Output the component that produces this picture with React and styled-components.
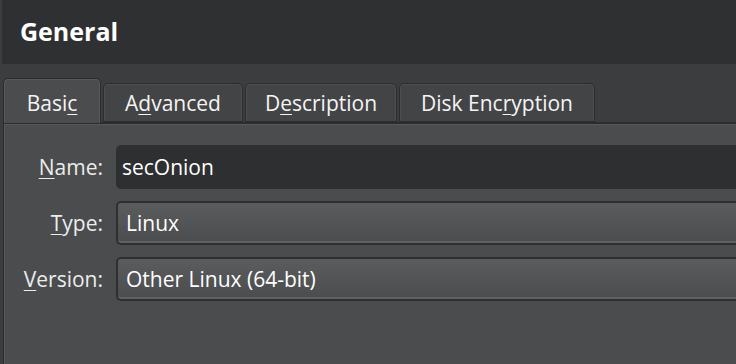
import React from "react";
import styled, { createGlobalStyle } from "styled-components";

const Global = createGlobalStyle`
  html, body {
    margin: 0;
    padding: 0;
    background: #3c3d3f;
    overflow: hidden;
  }
  body {
    font-family: "Open Sans", "Noto Sans", sans-serif;
    color: #f2f2f2;
  }
`;

const Page = styled.div`
  width: 736px;
  height: 364px;
  display: flex;
  flex-direction: column;
  background: #3c3d3f;
`;

const Header = styled.div`
  height: 64px;
  margin-left: 2px;
  padding-left: 18px;
  padding-bottom: 3px;
  box-sizing: border-box;
  display: flex;
  align-items: center;
  background: #2f3032;
  font-size: 25px;
  font-weight: 700;
  color: #ffffff;
`;

const TabBar = styled.div`
  display: flex;
  align-items: flex-end;
  gap: 2px;
  margin-top: 14px;
  padding-left: 3px;
  height: 44px;
  position: relative;
  z-index: 1;
`;

const Tab = styled.div`
  box-sizing: border-box;
  width: ${(p) => p.$w}px;
  height: ${(p) => (p.$active ? 45 : 39)}px;
  display: flex;
  align-items: center;
  justify-content: center;
  padding-top: ${(p) => (p.$active ? 4 : 1)}px;
  border: 1px solid #2b2c2e;
  border-bottom: ${(p) => (p.$active ? "none" : "1px solid #2b2c2e")};
  border-radius: 5px 5px 0 0;
  background: ${(p) => (p.$active ? "#4b4c4e" : "#434446")};
  box-shadow: inset 1px 1px 0 ${(p) => (p.$active ? "#58595b" : "#4d4e50")},
    inset -1px 0 0 ${(p) => (p.$active ? "#58595b" : "#4d4e50")};
  font-size: 21px;
  color: #f4f4f4;
  margin-bottom: ${(p) => (p.$active ? -1 : 0)}px;
`;

const Key = styled.span`
  text-decoration: underline;
  text-underline-offset: 3px;
  text-decoration-thickness: 1px;
`;

const Panel = styled.div`
  flex: 1;
  margin-left: 3px;
  border-top: 2px solid #2b2c2e;
  border-left: 1px solid #2b2c2e;
  background: #4b4c4e;
  box-shadow: inset 1px 1px 0 #58595b;
  padding-top: 21px;
  display: grid;
  grid-template-columns: 99px 1fr;
  column-gap: 13px;
  row-gap: 12px;
  align-content: start;
`;

const Label = styled.label`
  justify-self: end;
  align-self: center;
  font-size: 21px;
  color: #ececec;
`;

const Field = styled.div`
  box-sizing: border-box;
  height: 44px;
  margin-right: -8px;
  display: flex;
  align-items: center;
  font-size: 21px;
  color: #ffffff;
  border-radius: 5px;
  ${(p) =>
    p.$combo
      ? `
    padding-left: 8px;
    border: 2px solid #2e2f31;
    background: linear-gradient(#5b5c5e, #4b4c4e);
    box-shadow: inset 0 -3px 0 -1px #606163;
  `
      : `
    padding-left: 6px;
    background: #2e2f31;
  `}
`;

export default function App() {
  return (
    <Page>
      <Global />
      <Header>General</Header>
      <TabBar>
        <Tab $active $w={98}>
          Basi<Key>c</Key>
        </Tab>
        <Tab $w={140}>
          A<Key>d</Key>vanced
        </Tab>
        <Tab $w={152}>
          D<Key>e</Key>scription
        </Tab>
        <Tab $w={196}>
          Disk Enc<Key>r</Key>yption
        </Tab>
      </TabBar>
      <Panel>
        <Label>
          <Key>N</Key>ame:
        </Label>
        <Field>secOnion</Field>
        <Label>
          <Key>T</Key>ype:
        </Label>
        <Field $combo>Linux</Field>
        <Label>
          <Key>V</Key>ersion:
        </Label>
        <Field $combo>Other Linux (64-bit)</Field>
      </Panel>
    </Page>
  );
}
